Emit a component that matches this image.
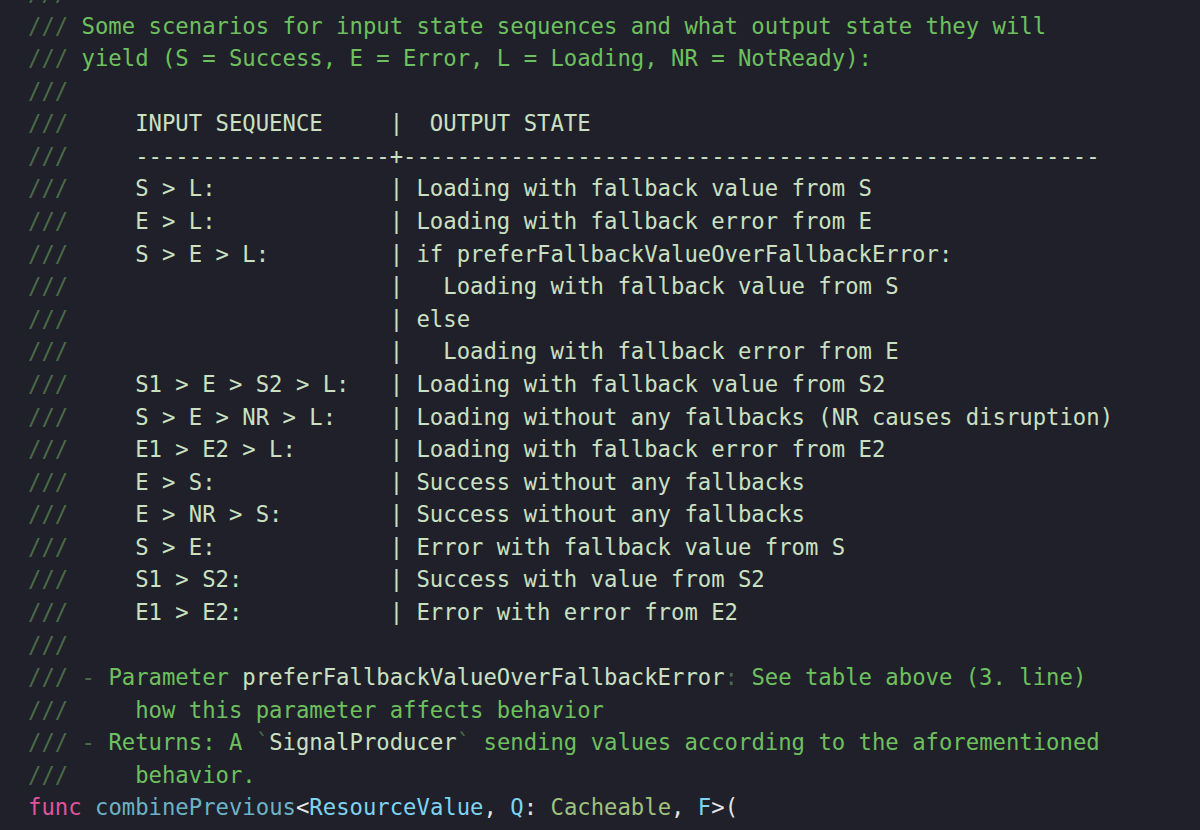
type Seg = [string, string];

const S = "text-[#4b6b48]"; // doc slashes, dim
const G = "text-[#6ec05f]"; // comment text
const C = "text-[#cbe0c2]"; // code inside doc
const W = "text-[#e4e4e4]";
const PK = "text-[#e0549e]";
const FN = "text-[#6cb3c6]";
const TY = "text-[#7dd3f0]";
const OL = "text-[#9fc27c]";

const doc = (text: string): Seg[] => [["///", S], [text, G]];
const code = (text: string): Seg[] => [["///", S], [text, C]];

const rows: [string, string][] = [
  ["S > L:", "| Loading with fallback value from S"],
  ["E > L:", "| Loading with fallback error from E"],
  ["S > E > L:", "| if preferFallbackValueOverFallbackError:"],
  ["", "|   Loading with fallback value from S"],
  ["", "| else"],
  ["", "|   Loading with fallback error from E"],
  ["S1 > E > S2 > L:", "| Loading with fallback value from S2"],
  ["S > E > NR > L:", "| Loading without any fallbacks (NR causes disruption)"],
  ["E1 > E2 > L:", "| Loading with fallback error from E2"],
  ["E > S:", "| Success without any fallbacks"],
  ["E > NR > S:", "| Success without any fallbacks"],
  ["S > E:", "| Error with fallback value from S"],
  ["S1 > S2:", "| Success with value from S2"],
  ["E1 > E2:", "| Error with error from E2"],
];

const lines: Seg[][] = [
  [["///", S]],
  doc(" Some scenarios for input state sequences and what output state they will"),
  doc(" yield (S = Success, E = Error, L = Loading, NR = NotReady):"),
  [["///", S]],
  code("     INPUT SEQUENCE     |  OUTPUT STATE"),
  code("     " + "-".repeat(19) + "+" + "-".repeat(52)),
  ...rows.map(([a, b]) => code("     " + a.padEnd(19, " ") + b)),
  [["///", S]],
  [
    ["///", S],
    [" - ", S],
    ["Parameter ", G],
    ["preferFallbackValueOverFallbackError", C],
    [":", S],
    [" See table above (3. line)", G],
  ],
  doc("     how this parameter affects behavior"),
  [
    ["///", S],
    [" - ", S],
    ["Returns: A ", G],
    ["`", S],
    ["SignalProducer", C],
    ["`", S],
    [" sending values according to the aforementioned", G],
  ],
  doc("     behavior."),
  [
    ["func", PK],
    [" ", W],
    ["combinePrevious", FN],
    ["<", W],
    ["ResourceValue", TY],
    [", ", W],
    ["Q", TY],
    [": ", W],
    ["Cacheable", OL],
    [", ", W],
    ["F", TY],
    [">(", W],
  ],
];

export default function App() {
  return (
    <div className="h-[830px] w-[1200px] overflow-hidden bg-[#1f2029]">
      <div className="-mt-[23px] pl-[28px] font-['DejaVu_Sans_Mono','Liberation_Mono',monospace] text-[22.25px] leading-[32.58px]">
        {lines.map((segs, i) => (
          <div key={i} className="h-[32.58px] whitespace-pre">
            {segs.map(([t, c], j) => (
              <span key={j} className={c}>
                {t}
              </span>
            ))}
          </div>
        ))}
      </div>
    </div>
  );
}
